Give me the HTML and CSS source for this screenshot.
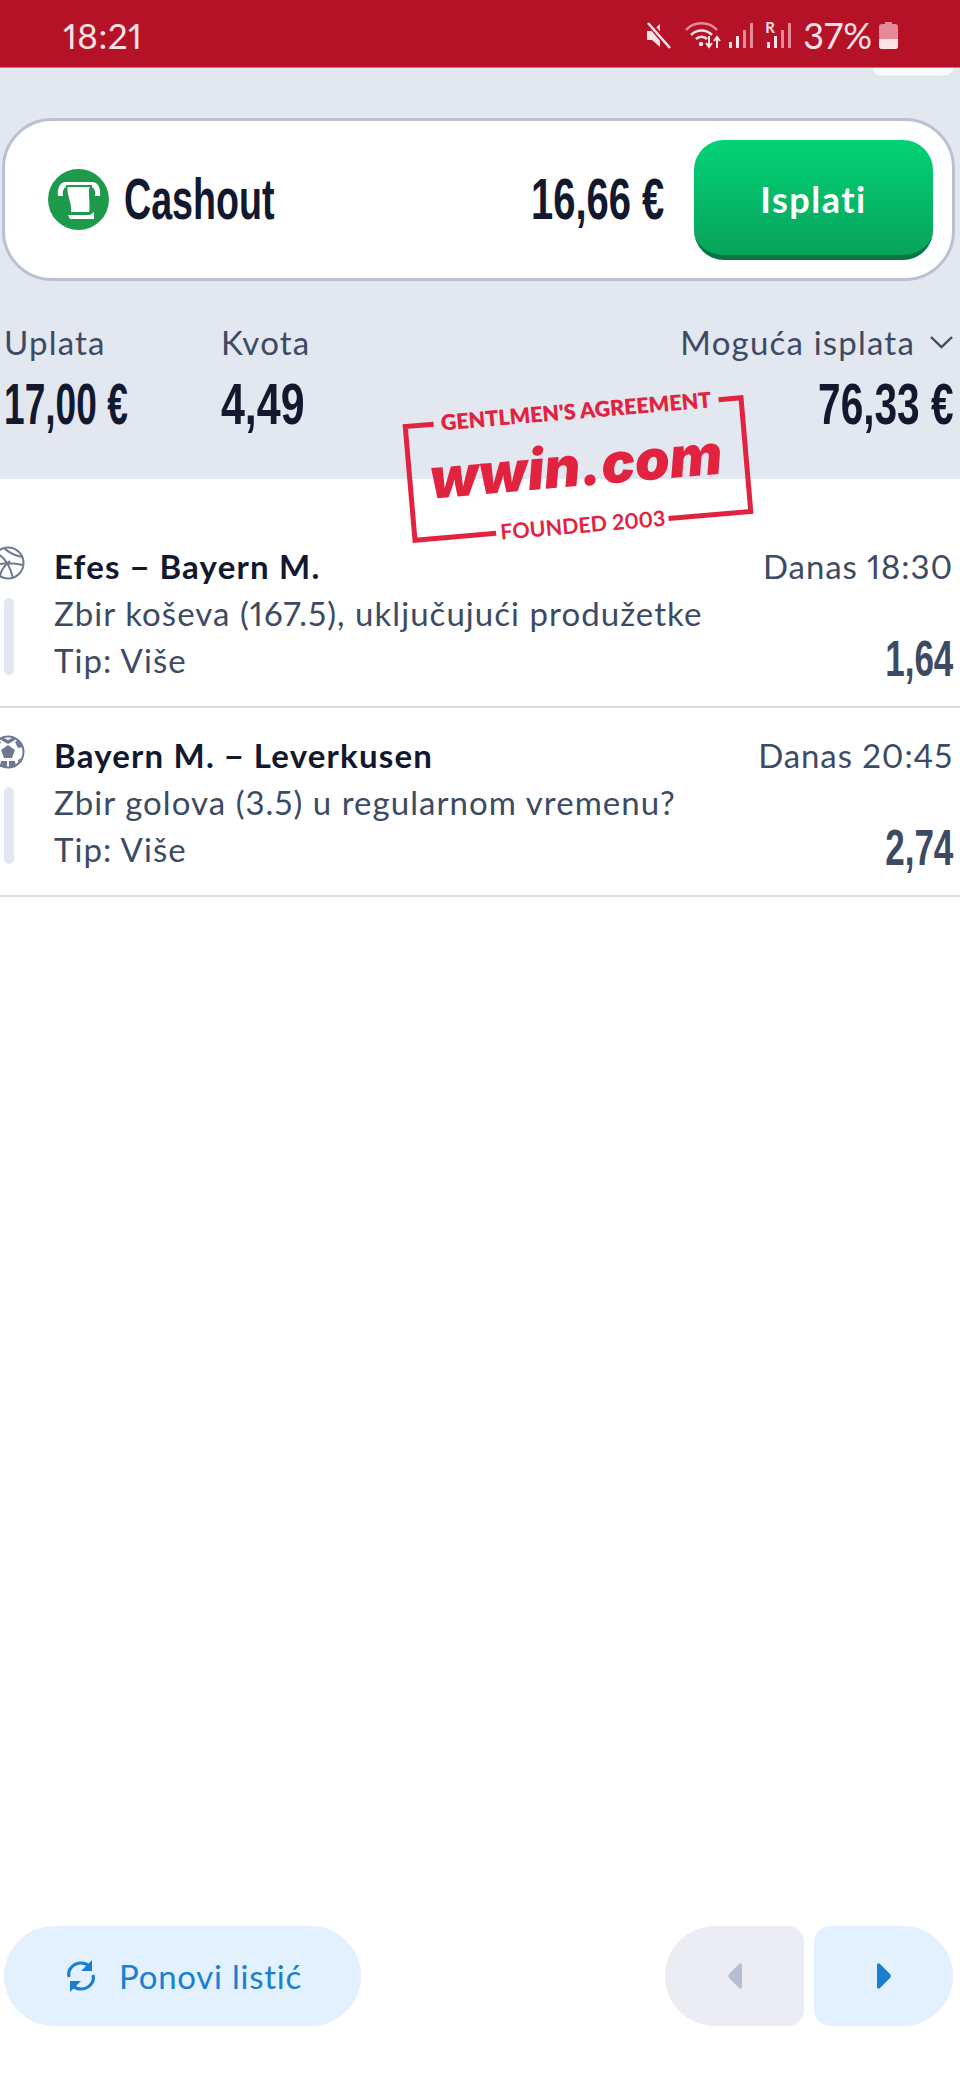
FILE: index.html
```html
<!DOCTYPE html>
<html lang="sr">
<head>
    <meta charset="UTF-8">
    <meta name="viewport" content="width=device-width, initial-scale=1.0">
    <title>Cashout</title>
    <link rel="stylesheet" href="styles.css">
</head>
<body>

    <div class="status-bar">
        <span class="clock">18:21</span>
        <div class="status-icons">
            <svg class="ic-mute" viewBox="0 0 26 27"><path d="M1 9h5l8-7v23l-8-7H1z" fill="#fbe3e6"/><path d="M3 1l21 25" stroke="#b51228" stroke-width="6"/><path d="M2 1l22 25" stroke="#fbe3e6" stroke-width="2.6"/></svg>
            <svg class="ic-wifi" viewBox="0 0 36 30"><path d="M1 10C9 1 24 1 32 10" fill="none" stroke="#e58a98" stroke-width="2.6"/><path d="M6 15c6-6 15-6 21 0M11 19c3-3 8-3 11 0" fill="none" stroke="#fbe3e6" stroke-width="2.6"/><circle cx="16" cy="24" r="2.2" fill="#fbe3e6"/><path d="M24 16v11M21 23l3 4 3-4M32 28V17M29 21l3-4 3 4" fill="none" stroke="#fbe3e6" stroke-width="2"/></svg>
            <svg class="ic-signal" viewBox="0 0 24 27"><rect x="0" y="20" width="3" height="6" fill="#fbe3e6"/><rect x="7" y="14" width="3" height="12" fill="#fbe3e6"/><rect x="14" y="8" width="3" height="18" fill="#e58a98"/><rect x="21" y="1" width="3" height="25" fill="#e58a98"/></svg>
            <div class="roaming">
                <span class="roaming-r">R</span>
                <svg class="ic-signal-r" viewBox="0 0 26 27"><rect x="2" y="20" width="3" height="6" fill="#fbe3e6"/><rect x="9" y="14" width="3" height="12" fill="#fbe3e6"/><rect x="16" y="8" width="3" height="18" fill="#e58a98"/><rect x="23" y="1" width="3" height="25" fill="#e58a98"/></svg>
            </div>
            <span class="battery-pct">37%</span>
            <svg class="ic-battery" viewBox="0 0 19 27"><path d="M6 0h7v2h3a3 3 0 0 1 3 3v19a3 3 0 0 1-3 3H3a3 3 0 0 1-3-3V5a3 3 0 0 1 3-3h3z" fill="#e58a98"/><path d="M0 17h19v7a3 3 0 0 1-3 3H3a3 3 0 0 1-3-3z" fill="#fbe3e6"/></svg>
        </div>
    </div>

    <div class="header">
        <div class="top-tab"></div>
        <div class="cashout-card">
            <svg class="cashout-logo" viewBox="0 0 61 61">
                <circle cx="30.5" cy="30.5" r="30.5" fill="#1f9a4d"/>
                <path d="M10 27c-1-8 2-14 8-14h26c6 0 9 6 8 14h-5c1-5-1-9-4-9H19c-3 0-5 4-4 9z" fill="#fff"/>
                <path d="M19 17h24c-3 7 1 17-1 27H22c2-10-6-20-3-27z" fill="#fff" stroke="#1f9a4d" stroke-width="2"/>
                <path d="M20 46h22l4-3v7H22z" fill="#fff"/>
            </svg>
            <span class="cond cond-title cashout-title">Cashout</span>
            <span class="cond cond-r cashout-sum">16,66 €</span>
            <button class="pay-btn">Isplati</button>
        </div>
        <div class="totals">
            <div class="total-col total-stake">
                <span class="total-label">Uplata</span>
                <span class="cond cond-l total-value">17,00 €</span>
            </div>
            <div class="total-col total-odds">
                <span class="total-label">Kvota</span>
                <span class="cond cond-l total-value">4,49</span>
            </div>
            <div class="total-col total-win">
                <span class="total-label">Moguća isplata
                    <svg class="ic-chevron" viewBox="0 0 25 14"><path d="M2 2l10.500 10L23 2" fill="none" stroke="#3d4a63" stroke-width="2.4"/></svg>
                </span>
                <span class="cond cond-r total-value">76,33 €</span>
            </div>
        </div>
    </div>

    <svg class="stamp" viewBox="0 0 360 140">
        <g transform="rotate(-4.9 180 65)">
            <path class="stamp-frame" d="M40 8H11.500V122H93M266 122H348.500V8H326"/>
            <text class="stamp-top" x="183" y="15" text-anchor="middle">GENTLMEN'S AGREEMENT</text>
            <text class="stamp-main" x="178" y="82" text-anchor="middle">wwin.com</text>
            <text class="stamp-bottom" x="180" y="129" text-anchor="middle">FOUNDED 2003</text>
        </g>
    </svg>

    <div class="list">
        <div class="row">
            <div class="row-side">
                <svg class="sport-icon" viewBox="0 0 34 34"><g fill="none" stroke="#6f7a92" stroke-width="2"><circle cx="17" cy="17" r="15.500"/><path d="M5 7c7 3 13 9 17 25M13 2c5 5 13 8 19 9M2 20c8-3 17-4 30-1M9 30c1-6 5-11 10-15"/></g></svg>
                <div class="row-bar"></div>
            </div>
            <div class="row-main">
                <div class="row-title">Efes − Bayern M.</div>
                <div class="row-text">Zbir koševa (167.5), uključujući produžetke</div>
                <div class="row-text">Tip: Više</div>
            </div>
            <div class="row-right">
                <div class="row-time">Danas 18:30</div>
                <span class="cond cond-r row-odd">1,64</span>
            </div>
        </div>
        <div class="row">
            <div class="row-side">
                <svg class="sport-icon" viewBox="0 0 34 34"><circle cx="17" cy="17" r="15.500" fill="none" stroke="#6f7a92" stroke-width="2"/><path d="M17 10l7 5-3 8h-8l-3-8z" fill="#6f7a92"/><path d="M11 2l6 3 6-3 1 3-7 4-7-4zM32 12l-5 1-3-6 3-2zM2 12l5 1 3-6-3-2zM9 32l1-6 6 0 0 6zM25 32l-1-6-6 0 0 6zM2 22l5 3-1 4-3-3zM32 22l-5 3 1 4 3-3z" fill="#6f7a92"/></svg>
                <div class="row-bar"></div>
            </div>
            <div class="row-main">
                <div class="row-title">Bayern M. − Leverkusen</div>
                <div class="row-text">Zbir golova (3.5) u regularnom vremenu?</div>
                <div class="row-text">Tip: Više</div>
            </div>
            <div class="row-right">
                <div class="row-time">Danas 20:45</div>
                <span class="cond cond-r row-odd">2,74</span>
            </div>
        </div>
    </div>

    <div class="footer">
        <button class="repeat-btn">
            <svg class="ic-repeat" viewBox="0 0 32 32"><g fill="none" stroke="#1a7fd0" stroke-width="3.200"><path d="M4 17C2 9 9 3 16 3c3 0 6 1 8 3"/><path d="M28 15c2 8-5 14-12 14-3 0-6-1-8-3"/></g><path d="M27 0v11H16zM5 32V21h11z" fill="#1a7fd0"/></svg>
            Ponovi listić
        </button>
        <div class="pager">
            <button class="page-btn page-prev"><svg class="ic-arrow" viewBox="0 0 16 26"><path d="M15 2v22c0 2-2 2-3 1L2 15c-1-1-1-3 0-4L12 1c1-1 3-1 3 1z" fill="#b6bed3"/></svg></button>
            <button class="page-btn page-next"><svg class="ic-arrow" viewBox="0 0 16 26"><path d="M1 2v22c0 2 2 2 3 1l10-10c1-1 1-3 0-4L4 1C3 0 1 0 1 2z" fill="#1a7fd0"/></svg></button>
        </div>
    </div>

</body>
</html>
```

FILE: styles.css
```css
* { box-sizing: border-box; }
html, body { margin: 0; padding: 0; }
body { position: relative; width: 960px; height: 2080px; display: flex; flex-direction: column; overflow: hidden; background-color: #fff; font-family: Lato, "Liberation Sans", sans-serif; font-variant-numeric: proportional-nums; color: #3d4a63; }
button { font-family: inherit; font-variant-numeric: inherit; border: none; padding: 0; cursor: pointer; }

/* squeezed numbers, no condensed face is installed */
.cond { display: inline-block; font-family: "Liberation Sans", sans-serif; font-weight: 700; color: #12182e; white-space: nowrap; line-height: 1; }
.cond-l { transform: scaleX(.74); transform-origin: left center; }
.cond-r { transform: scaleX(.7); transform-origin: right center; }
.cond-title { transform: scaleX(.66); transform-origin: left center; }
.total-stake .cond-l { transform: scaleX(.64); }

.status-bar { height: 68px; flex: none; display: flex; align-items: center; justify-content: space-between; padding: 3px 62px 0 63px; background-color: #b51228; color: #fbe3e6; border-bottom: 1px solid #d9707f; }
.clock { font-size: 35px; letter-spacing: .5px; }
.status-icons { display: flex; align-items: center; }
.ic-mute { width: 26px; height: 27px; }
.ic-wifi { width: 36px; height: 30px; margin-left: 13px; }
.ic-signal { width: 24px; height: 27px; margin-left: 8px; }
.roaming { position: relative; width: 26px; height: 27px; margin-left: 12px; }
.roaming-r { position: absolute; left: 0; top: -4px; font-size: 15px; font-weight: 700; }
.ic-signal-r { width: 26px; height: 27px; }
.battery-pct { font-size: 36px; margin-left: 12px; line-height: 1; }
.ic-battery { width: 19px; height: 27px; margin-left: 7px; }

.header { position: relative; height: 411px; flex: none; padding: 50px 5px 0 2px; background-color: #e2e7f0; }
.top-tab { position: absolute; right: 7px; top: 0; width: 80px; height: 7px; background-color: #fff; border-radius: 0 0 8px 8px; }
.cashout-card { height: 163px; display: flex; align-items: center; padding: 0 19px 0 43px; background-color: #fff; border: 3px solid #b9c0d2; border-radius: 50px; }
.cashout-logo { width: 61px; height: 61px; flex: none; }
.cashout-title { font-size: 57px; margin-left: 15px; }
.cashout-sum { font-size: 57px; margin-left: auto; margin-right: 30px; }
.pay-btn { width: 239px; height: 120px; flex: none; padding-top: 3px; font-size: 36px; font-weight: 700; letter-spacing: 1.5px; color: #fff; background: linear-gradient(#03d276, #08a35b); border-bottom: 5px solid #0a7443; border-radius: 30px; }

.totals { display: flex; margin-top: 39px; padding-left: 2px; }
.total-col { display: flex; flex-direction: column; align-items: flex-start; }
.total-stake { width: 217px; }
.total-win { margin-left: auto; align-items: flex-end; margin-right: 1px; }
.total-label { height: 44px; display: flex; align-items: center; gap: 14px; font-size: 33px; letter-spacing: 1.2px; line-height: 44px; white-space: nowrap; }
.ic-chevron { width: 25px; height: 14px; }
.total-value { font-size: 58px; margin-top: 11px; }

.stamp { position: absolute; left: 398px; top: 404px; width: 360px; height: 140px; overflow: visible; }
.stamp-frame { fill: none; stroke: #e2233f; stroke-width: 5; }
.stamp-top { font-size: 21.500px; font-weight: 800; fill: #e2233f; }
.stamp-main { font-family: Inter, Lato, sans-serif; font-size: 56px; font-weight: 900; font-style: italic; fill: #e2233f; }
.stamp-bottom { font-size: 21.500px; font-weight: 700; fill: #e2233f; }

.list { flex: 1; padding-top: 40px; }
.row { height: 189px; display: flex; padding: 24px 7px 0 0; border-bottom: 2px solid #d9dde5; }
.row-side { width: 54px; flex: none; display: flex; flex-direction: column; }
.sport-icon { width: 34px; height: 34px; margin: 3px 0 0 -9px; flex: none; }
.row-bar { width: 10px; height: 77px; margin: 18px 0 0 4px; background-color: #e2e7f0; border-radius: 5px; }
.row-main { flex: 1; }
.row-title { font-size: 33px; font-weight: 700; letter-spacing: 1.2px; color: #12182e; line-height: 47px; }
.row-text { font-size: 33px; letter-spacing: 1.05px; line-height: 47px; }
.row-right { display: flex; flex-direction: column; align-items: flex-end; }
.row-time { font-size: 33px; letter-spacing: .9px; line-height: 47px; }
.row-odd { font-size: 50px; margin-top: 44px; color: #3d4a63; }

.footer { flex: none; display: flex; justify-content: space-between; padding: 0 7px 54px 4px; }
.repeat-btn { width: 357px; height: 100px; display: flex; align-items: center; gap: 22px; padding-left: 61px; font-size: 33px; letter-spacing: .75px; color: #1a7fd0; background-color: #e2f1fd; border-radius: 50px; }
.ic-repeat { width: 32px; height: 32px; flex: none; }
.pager { display: flex; gap: 10px; }
.page-btn { width: 139px; height: 100px; display: flex; align-items: center; justify-content: center; }
.page-prev { background-color: #ecedf3; border-radius: 50px 16px 16px 50px; }
.page-next { background-color: #e2f1fd; border-radius: 16px 50px 50px 16px; }
.ic-arrow { width: 16px; height: 26px; }
```
